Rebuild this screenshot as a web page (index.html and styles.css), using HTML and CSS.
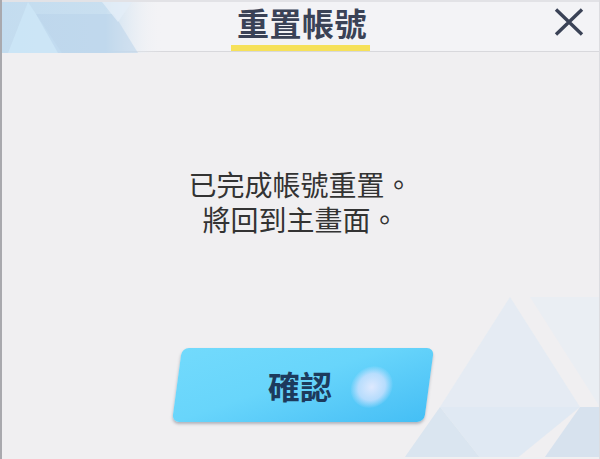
FILE: index.html
```html
<!DOCTYPE html>
<html lang="zh-Hant">
<head>
<meta charset="utf-8">
<title>重置帳號</title>
<link rel="stylesheet" href="styles.css">
</head>
<body>
<div class="dialog">
  <header class="head">
    <svg class="head-deco" width="160" height="51" viewBox="0 0 160 51" aria-hidden="true">
      <defs>
        <linearGradient id="hg" x1="0" y1="0" x2="1" y2="0">
          <stop offset="0" stop-color="#c3dcef"/>
          <stop offset="0.65" stop-color="#c9dff0"/>
          <stop offset="1" stop-color="#f3f3f6" stop-opacity="0"/>
        </linearGradient>
      </defs>
      <rect x="0" y="0" width="160" height="51" fill="url(#hg)"/>
      <polygon points="6,51 26,0 60,51" fill="#cde6f7" opacity="0.85"/>
      <polygon points="34,12 112,12 136,51 56,51" fill="#b8d2e9" opacity="0.5"/>
      <polygon points="100,0 130,0 116,20" fill="#e4eef7" opacity="0.8"/>
    </svg>
    <div class="head-side"></div>
    <div class="title-wrap"><h1 class="title">重置帳號</h1></div>
    <div class="head-side head-right">
      <button class="close" aria-label="關閉">
        <svg width="30" height="28" viewBox="0 0 30 28"><path d="M2 1.5 L28 26.5 M28 1.5 L2 26.5" stroke="#3a4256" stroke-width="3.4" fill="none"/></svg>
      </button>
    </div>
  </header>
  <main class="body">
    <svg class="body-deco" width="220" height="200" viewBox="0 0 220 200" aria-hidden="true">
      <polygon points="150,40 220,40 220,150" fill="#e6edf5" opacity="0.6"/>
      <polygon points="130,40 60,150 200,150" fill="#e0eaf4" opacity="0.7"/>
      <polygon points="60,150 20,207 105,207" fill="#d3e1ef" opacity="0.75"/>
      <polygon points="60,150 200,150 130,207 105,207" fill="#dbe7f3" opacity="0.75"/>
      <polygon points="200,150 220,150 220,207 160,207" fill="#d1dfed" opacity="0.8"/>
    </svg>
    <p class="msg"><span class="msg-line">已完成帳號重置。</span><span class="msg-line">將回到主畫面。</span></p>
    <div class="actions">
      <button class="confirm">
        <span class="confirm-label">確認</span>
        <span class="glow"></span>
      </button>
    </div>
  </main>
</div>
</body>
</html>
```

FILE: styles.css
```css
* { box-sizing: border-box; }
html, body { margin: 0; padding: 0; }
body {
  width: 600px;
  height: 459px;
  overflow: hidden;
  background: #f0eff1;
  font-family: "Noto Sans CJK TC", "Noto Sans CJK SC", "Noto Sans", sans-serif;
}
.dialog {
  position: relative;
  width: 600px;
  height: 459px;
  background: #f0eff1;
  border-left: 2px solid #a9a9ae;
  border-right: 1px solid #dcdce0;
  overflow: hidden;
}
.head {
  position: relative;
  height: 52px;
  display: grid;
  grid-template-columns: 1fr auto 1fr;
  background: #f3f3f6;
  border-top: 2px solid #e2e2e6;
  border-bottom: 1px solid #d8d8dc;
}
.head-deco {
  position: absolute;
  left: 0;
  top: 0;
}
.title-wrap {
  position: relative;
  padding: 4px 3px 7px 6px;
  border-bottom: 6px solid #f6e15a;
}
.title {
  margin: 0;
  font-size: 32px;
  line-height: 32px;
  font-weight: 700;
  color: #3a4256;
  letter-spacing: 0.5px;
}
.head-right {
  display: flex;
  justify-content: flex-end;
  align-items: flex-start;
  padding-right: 15px;
}
.close {
  margin: 6px 0 0;
  padding: 0;
  border: 0;
  background: none;
  width: 30px;
  height: 28px;
  display: block;
}
.close svg { display: block; }
.body {
  position: relative;
  height: 405px;
  display: flex;
  flex-direction: column;
  align-items: center;
}
.body-deco {
  position: absolute;
  right: -1px;
  bottom: 0;
}
.msg {
  position: relative;
  margin: 115px 0 0;
  display: flex;
  flex-direction: column;
  align-items: center;
  color: #333333;
}
.msg-line {
  display: block;
  font-size: 28px;
  line-height: 35px;
  height: 35px;
  overflow: visible;
}
.actions {
  position: relative;
  margin-top: 111px;
  display: flex;
  justify-content: center;
  padding-left: 4px;
}
.confirm {
  position: relative;
  width: 252px;
  height: 74px;
  border: 0;
  padding: 0;
  border-radius: 7px;
  transform: skewX(-7.7deg);
  background: linear-gradient(160deg, #72dafc 0%, #68d5fb 45%, #52c6f7 80%, #44bff5 100%);
  box-shadow: 0 2px 3px rgba(60, 70, 90, 0.35);
  display: flex;
  align-items: center;
  justify-content: center;
}
.confirm-label {
  display: block;
  transform: skewX(7.7deg);
  font-family: "Noto Sans CJK TC", "Noto Sans CJK SC", sans-serif;
  font-size: 32px;
  line-height: 32px;
  font-weight: 700;
  color: #1d3a5c;
  margin-left: -6px;
}
.glow {
  position: absolute;
  left: 174px;
  top: 18px;
  width: 42px;
  height: 42px;
  border-radius: 50%;
  background: radial-gradient(circle, rgba(236, 236, 255, 0.9) 0%, rgba(222, 228, 255, 0.7) 45%, rgba(200, 225, 255, 0) 72%);
}
```
